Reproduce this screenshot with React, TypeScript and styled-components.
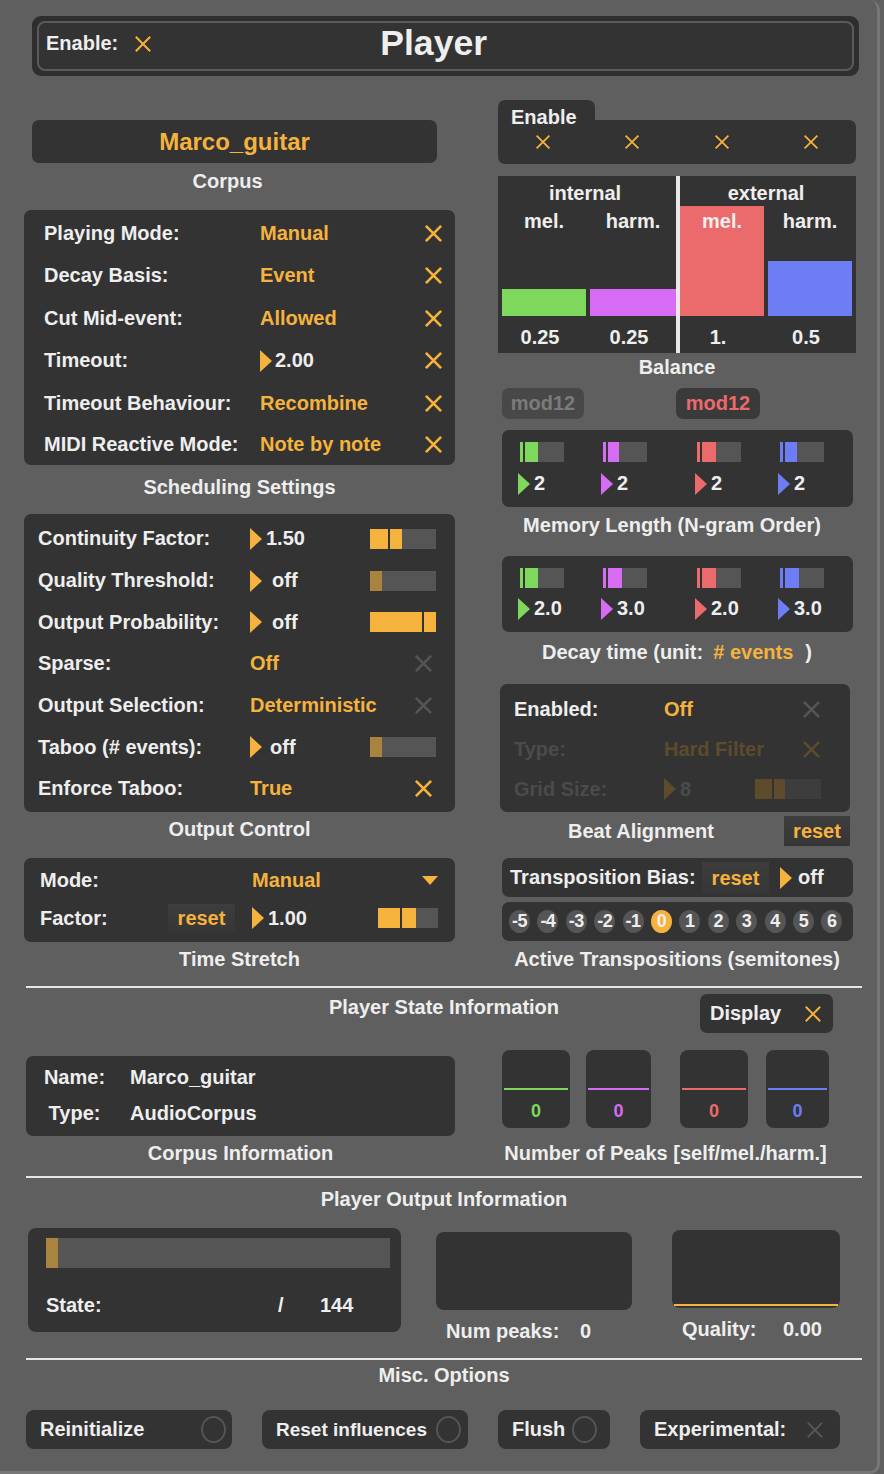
import React from "react";
import styled, { createGlobalStyle } from "styled-components";

const ORANGE = "#f5b23d";
const TEXT = "#eeeeee";
const BOX = "#333333";
const TRACK = "#555555";
const DIM = "#a8843f";
const GREEN = "#7ed85e";
const PURPLE = "#d56cf3";
const RED = "#eb6a6c";
const BLUE = "#6d7ef4";
const OFFX = "#555555";
const FADE_LABEL = "#4b4b4b";
const FADE_VAL = "#5d4b2c";

const GlobalStyle = createGlobalStyle`
  body {
    margin: 0;
    background: #5f5f5f;
    font-family: "Liberation Sans", Arial, Helvetica, sans-serif;
    font-weight: bold;
    color: ${TEXT};
  }
`;

const Panel = styled.div`
  width: 880px;
  height: 1474px;
  box-sizing: border-box;
  padding-top: 16px;
  background: #5f5f5f;
  border-right: 3px solid #777;
  border-bottom: 3px solid #777;
  border-radius: 0 10px 10px 0;
  overflow: hidden;
`;

const Header = styled.header`
  margin: 0 18px 0 32px;
  height: 60px;
  box-sizing: border-box;
  padding: 5px;
  background: #2e2e2e;
  border-radius: 9px;
`;

const HeaderInner = styled.div`
  height: 100%;
  box-sizing: border-box;
  border: 2px solid #5a5a5a;
  border-radius: 8px;
  background: ${BOX};
  display: flex;
  align-items: center;
  padding: 0 0 5px 7px;
  font-size: 20px;
`;

const Title = styled.h1`
  margin: 0 0 0 228px;
  font-size: 35.6px;
  font-weight: bold;
`;

const XSvg = styled.svg`
  display: block;
  flex: none;
`;

const XIcon = ({ size = 19, color = ORANGE, stroke = 2.8, ml = 0 }: { size?: number; color?: string; stroke?: number; ml?: number }) => (
  <XSvg width={size} height={size} viewBox="0 0 20 20" style={ml ? { marginLeft: ml } : undefined}>
    <path d="M2 2L18 18M18 2L2 18" stroke={color} strokeWidth={stroke} fill="none" />
  </XSvg>
);

const Tri = styled.span<{ $c: string }>`
  display: block;
  flex: none;
  width: 0;
  height: 0;
  border-top: 11px solid transparent;
  border-bottom: 11px solid transparent;
  border-left: 12px solid ${(p) => p.$c};
`;

const DownArrow = styled.span`
  display: block;
  justify-self: end;
  width: 0;
  height: 0;
  border-left: 8px solid transparent;
  border-right: 8px solid transparent;
  border-top: 9px solid ${ORANGE};
`;

const NumField = styled.div<{ $gap: number; $c?: string }>`
  display: flex;
  align-items: center;
  gap: ${(p) => p.$gap}px;
  color: ${(p) => p.$c ?? TEXT};
  font-size: 20px;
`;

const Track = styled.div<{ $w: number; $h: number; $bg: string }>`
  display: flex;
  flex: none;
  justify-self: end;
  width: ${(p) => p.$w}px;
  height: ${(p) => p.$h}px;
  background: ${(p) => p.$bg};
`;

const Seg = styled.div<{ $w: number; $c: string }>`
  width: ${(p) => p.$w}px;
  background: ${(p) => p.$c};
`;

const SegGap = styled.div`
  width: 2px;
  background: ${BOX};
`;

type SliderProps = { w: number; h?: number; a: number; b?: number; color: string; bg?: string };
const Slider = ({ w, h = 20, a, b = 0, color, bg = TRACK }: SliderProps) => (
  <Track $w={w} $h={h} $bg={bg}>
    <Seg $w={a} $c={color} />
    {b > 0 && (
      <>
        <SegGap />
        <Seg $w={b} $c={color} />
      </>
    )}
  </Track>
);

const Columns = styled.div`
  display: grid;
  grid-template-columns: 431px 358px;
  column-gap: 43px;
  margin-left: 24px;
  align-items: start;
`;

const Column = styled.div`
  display: flex;
  flex-direction: column;
`;

const Caption = styled.div<{ $mt: number; $shift?: number }>`
  margin-top: ${(p) => p.$mt}px;
  padding-right: ${(p) => p.$shift ?? 0}px;
  height: 22px;
  line-height: 22px;
  text-align: center;
  font-size: 20px;
  white-space: nowrap;
`;

const Accent = styled.span<{ $ml: number; $mr: number }>`
  color: ${ORANGE};
  margin: 0 ${(p) => p.$mr}px 0 ${(p) => p.$ml}px;
`;

const CorpusBox = styled.div`
  margin: 44px 18px 0 8px;
  height: 43px;
  border-radius: 7px;
  background: ${BOX};
  color: ${ORANGE};
  font-size: 24px;
  line-height: 43px;
  text-align: center;
`;

const SettingsBox = styled.div<{ $mt: number; $h: number; $pad: string }>`
  margin-top: ${(p) => p.$mt}px;
  height: ${(p) => p.$h}px;
  box-sizing: border-box;
  padding: ${(p) => p.$pad};
  border-radius: 7px;
  background: ${BOX};
`;

const Row = styled.div<{ $cols: string; $h: number }>`
  display: grid;
  grid-template-columns: ${(p) => p.$cols};
  align-items: center;
  height: ${(p) => p.$h}px;
  font-size: 20px;
  white-space: nowrap;
`;

const Label = styled.span<{ $fade?: boolean }>`
  color: ${(p) => (p.$fade ? FADE_LABEL : TEXT)};
`;

const Value = styled.span<{ $fade?: boolean }>`
  color: ${(p) => (p.$fade ? FADE_VAL : ORANGE)};
`;

const EndCell = styled.div<{ $mr?: number }>`
  justify-self: end;
  margin-right: ${(p) => p.$mr ?? 0}px;
`;

const ResetButton = styled.div<{ $w: number; $h: number }>`
  width: ${(p) => p.$w}px;
  height: ${(p) => p.$h}px;
  line-height: ${(p) => p.$h}px;
  flex: none;
  text-align: center;
  color: ${ORANGE};
  font-size: 20px;
  background: linear-gradient(#3d3d3d, #363636);
`;

/* right column */
const EnableGroup = styled.div`
  display: block;
  margin-top: 24px;
`;

const EnableTab = styled.div`
  width: 97px;
  height: 20px;
  box-sizing: border-box;
  padding-left: 13px;
  border-radius: 7px 7px 0 0;
  background: ${BOX};
  font-size: 20px;
  line-height: 34px;
  white-space: nowrap;
`;

const EnableBox = styled.div`
  height: 44px;
  border-radius: 0 7px 7px 7px;
  background: ${BOX};
  display: flex;
  align-items: center;
  justify-content: space-around;
`;

const BalanceBox = styled.div`
  margin-top: 12px;
  height: 177px;
  background: ${BOX};
  display: grid;
  grid-template-columns: 4px 84px 4px 86px 4px 84px 4px 84px 4px;
  grid-template-rows: 30px 110px 37px;
  font-size: 20px;
`;

const GroupHead = styled.div<{ $col: string; $pr?: number }>`
  grid-column: ${(p) => p.$col};
  grid-row: 1;
  padding: 6px ${(p) => p.$pr ?? 0}px 0 0;
  line-height: 22px;
  text-align: center;
`;

const Divider = styled.div`
  grid-column: 5;
  grid-row: 1 / 4;
  background: #e9e9e9;
`;

const BarCell = styled.div<{ $col: number }>`
  grid-column: ${(p) => p.$col};
  grid-row: 2;
  display: grid;
`;

const Bar = styled.div<{ $c: string }>`
  grid-area: 1 / 1;
  align-self: end;
  background: ${(p) => p.$c};
`;

const BarLabel = styled.div`
  grid-area: 1 / 1;
  align-self: start;
  margin-top: 4px;
  line-height: 22px;
  text-align: center;
`;

const BarValue = styled.div<{ $col: number }>`
  grid-column: ${(p) => p.$col};
  grid-row: 3;
  padding: 10px 8px 0 0;
  line-height: 22px;
  text-align: center;
`;

const ModRow = styled.div`
  margin: 10px 0 0 4px;
  display: flex;
  gap: 92px;
`;

const ModButton = styled.div<{ $on?: boolean }>`
  width: ${(p) => (p.$on ? 84 : 82)}px;
  height: 31px;
  border-radius: 7px;
  background: ${(p) => (p.$on ? "#3a3a3a" : "#484848")};
  color: ${(p) => (p.$on ? RED : "#7b7b7b")};
  font-size: 20px;
  line-height: 31px;
  text-align: center;
`;

const VoiceBox = styled.div<{ $mt: number; $h: number }>`
  margin: ${(p) => p.$mt}px 3px 0 4px;
  height: ${(p) => p.$h}px;
  box-sizing: border-box;
  padding: 12px 0 0 16px;
  border-radius: 7px;
  background: ${BOX};
  display: grid;
  grid-template-columns: 83px 94px 83px 1fr;
  align-items: start;
`;

const Voice = styled.div`
  display: flex;
  flex-direction: column;
  align-items: flex-start;
`;

const VoiceSlider = styled.div`
  margin-left: 2px;
`;

const VoiceNum = styled(NumField)<{ $mt: number }>`
  margin-top: ${(p) => p.$mt}px;
`;

const BeatBox = styled(SettingsBox)`
  margin-left: 2px;
  width: 350px;
`;

const BeatCaptionRow = styled.div`
  margin: 4px 6px 0 0;
  height: 30px;
  display: grid;
  grid-template-columns: 1fr 66px;
  align-items: center;
  font-size: 20px;
`;

const StripBox = styled.div<{ $mt: number }>`
  margin: ${(p) => p.$mt}px 3px 0 4px;
  height: 39px;
  border-radius: 7px;
  background: ${BOX};
  display: flex;
  align-items: center;
  font-size: 20px;
`;

const BiasLabel = styled.span`
  width: 192px;
  padding-left: 8px;
  flex: none;
  white-space: nowrap;
`;

const BiasNum = styled(NumField)`
  margin-left: 11px;
`;

const SemitoneRow = styled(StripBox)`
  padding-left: 7px;
  gap: 7.4px;
`;

const Semitone = styled.div<{ $on?: boolean }>`
  width: 21px;
  height: 23px;
  flex: none;
  border-radius: 50%;
  background: ${(p) => (p.$on ? ORANGE : TRACK)};
  color: ${TEXT};
  font-size: 18px;
  line-height: 23px;
  text-align: center;
  letter-spacing: -0.5px;
  white-space: nowrap;
`;

/* lower part */
const Rule = styled.div<{ $mt: number }>`
  margin: ${(p) => p.$mt}px 0 0 26px;
  width: 836px;
  height: 2px;
  background: #e6e6e6;
`;

const SectionHead = styled.div`
  margin: 6px 0 0 26px;
  width: 836px;
  display: grid;
  grid-template-columns: 1fr auto 1fr;
`;

const SectionTitle = styled.div<{ $mt?: number }>`
  margin: ${(p) => p.$mt ?? 0}px 0 0 26px;
  width: 836px;
  line-height: 22px;
  font-size: 20px;
  text-align: center;
`;

const HeadTitle = styled.div`
  grid-column: 2;
  line-height: 26px;
  font-size: 20px;
`;

const DisplayButton = styled.div`
  grid-column: 3;
  justify-self: end;
  margin-right: 29px;
  width: 133px;
  height: 39px;
  box-sizing: border-box;
  padding: 0 11px 0 10px;
  border-radius: 7px;
  background: ${BOX};
  display: flex;
  align-items: center;
  justify-content: space-between;
  font-size: 20px;
`;

const InfoGrid = styled.div`
  margin: 17px 0 0 26px;
  display: grid;
  grid-template-columns: 429px 327px;
  column-gap: 47px;
  row-gap: 6px;
  align-items: start;
`;

const CorpusInfo = styled.div`
  margin-top: 6px;
  height: 80px;
  box-sizing: border-box;
  padding-top: 3px;
  border-radius: 7px;
  background: ${BOX};
  display: grid;
  grid-template-columns: 97px 1fr;
  grid-auto-rows: 36px;
  column-gap: 7px;
  align-items: center;
  font-size: 20px;
`;

const InfoKey = styled.span`
  text-align: center;
`;

const PeaksRow = styled.div`
  display: flex;
  height: 78px;
`;

const PeakBox = styled.div<{ $w: number; $ml: number }>`
  width: ${(p) => p.$w}px;
  margin-left: ${(p) => p.$ml}px;
  box-sizing: border-box;
  padding: 38px 2px 0;
  border-radius: 8px;
  background: ${BOX};
`;

const PeakLine = styled.div<{ $c: string }>`
  height: 2px;
  background: ${(p) => p.$c};
`;

const PeakValue = styled.div<{ $c: string }>`
  margin-top: 11px;
  line-height: 20px;
  text-align: center;
  font-size: 18px;
  color: ${(p) => p.$c};
`;

const InfoCaption = styled.div`
  line-height: 22px;
  font-size: 20px;
  text-align: center;
  white-space: nowrap;
`;

const OutputRow = styled.div`
  margin: 18px 0 0 28px;
  display: flex;
  align-items: flex-start;
`;

const StateBox = styled.div`
  width: 373px;
  height: 104px;
  box-sizing: border-box;
  padding: 10px 11px 0 18px;
  border-radius: 8px;
  background: ${BOX};
`;

const StateLine = styled.div`
  margin-top: 26px;
  display: grid;
  grid-template-columns: 232px 42px auto;
  line-height: 22px;
  font-size: 20px;
`;

const MeterCol = styled.div<{ $ml: number; $w: number }>`
  margin-left: ${(p) => p.$ml}px;
  width: ${(p) => p.$w}px;
`;

const MeterBox = styled.div<{ $mt: number }>`
  margin-top: ${(p) => p.$mt}px;
  height: 78px;
  box-sizing: border-box;
  padding: 74px 2px 0;
  border-radius: 8px;
  background: ${BOX};
`;

const MeterTrace = styled.div<{ $c: string }>`
  height: 2px;
  background: ${(p) => p.$c};
`;

const MeterLabel = styled.div<{ $kw: number }>`
  margin-top: 10px;
  padding-left: 10px;
  display: grid;
  grid-template-columns: ${(p) => p.$kw}px auto;
  line-height: 22px;
  font-size: 20px;
`;

const MiscRow = styled.div`
  margin: 24px 0 0 26px;
  display: flex;
  gap: 30px;
`;

const MiscButton = styled.div<{ $w: number; $pr: number; $fs?: number }>`
  width: ${(p) => p.$w}px;
  height: 39px;
  box-sizing: border-box;
  padding: 0 ${(p) => p.$pr}px 0 14px;
  border-radius: 8px;
  background: ${BOX};
  display: flex;
  align-items: center;
  justify-content: space-between;
  font-size: ${(p) => p.$fs ?? 20}px;
  white-space: nowrap;
`;

const Ring = styled.span`
  width: 21px;
  height: 23px;
  flex: none;
  border: 2px solid #555;
  border-radius: 50%;
`;

const voices = [
  { c: GREEN, mem: [3, 13], decay: [3, 13], memV: "2", decayV: "2.0" },
  { c: PURPLE, mem: [3, 11], decay: [3, 14], memV: "2", decayV: "3.0" },
  { c: RED, mem: [3, 14], decay: [3, 14], memV: "2", decayV: "2.0" },
  { c: BLUE, mem: [3, 12], decay: [3, 14], memV: "2", decayV: "3.0" },
];

const balance = [
  { label: "mel.", v: 0.25, text: "0.25", c: GREEN, col: 2 },
  { label: "harm.", v: 0.25, text: "0.25", c: PURPLE, col: 4 },
  { label: "mel.", v: 1, text: "1.", c: RED, col: 6 },
  { label: "harm.", v: 0.5, text: "0.5", c: BLUE, col: 8 },
];

const peaks = [
  { c: GREEN, w: 68, ml: 0 },
  { c: PURPLE, w: 65, ml: 16 },
  { c: RED, w: 68, ml: 29 },
  { c: BLUE, w: 63, ml: 18 },
];

const semitones = [-5, -4, -3, -2, -1, 0, 1, 2, 3, 4, 5, 6];

const SCHED = "216px minmax(0, 1fr) auto";
const OUT = "212px minmax(0, 1fr) 66px";
const BEAT = "150px minmax(0, 1fr) auto";
const TIME = "128px 84px minmax(0, 1fr) 60px";

export default function App() {
  return (
    <>
      <GlobalStyle />
      <Panel>
        <Header>
          <HeaderInner>
            <span>Enable:</span>
            <XIcon size={18} stroke={2.2} ml={16} />
            <Title>Player</Title>
          </HeaderInner>
        </Header>

        <Columns>
          <Column>
            <CorpusBox>Marco_guitar</CorpusBox>
            <Caption $mt={7} $shift={24}>Corpus</Caption>

            <SettingsBox $mt={18} $h={255} $pad="2px 12px 0 20px">
              <Row $cols={SCHED} $h={42.5}>
                <Label>Playing Mode:</Label>
                <Value>Manual</Value>
                <XIcon />
              </Row>
              <Row $cols={SCHED} $h={42.5}>
                <Label>Decay Basis:</Label>
                <Value>Event</Value>
                <XIcon />
              </Row>
              <Row $cols={SCHED} $h={42.5}>
                <Label>Cut Mid-event:</Label>
                <Value>Allowed</Value>
                <XIcon />
              </Row>
              <Row $cols={SCHED} $h={42.5}>
                <Label>Timeout:</Label>
                <NumField $gap={3}>
                  <Tri $c={ORANGE} />
                  2.00
                </NumField>
                <XIcon />
              </Row>
              <Row $cols={SCHED} $h={42}>
                <Label>Timeout Behaviour:</Label>
                <Value>Recombine</Value>
                <XIcon />
              </Row>
              <Row $cols={SCHED} $h={40}>
                <Label>MIDI Reactive Mode:</Label>
                <Value>Note by note</Value>
                <XIcon />
              </Row>
            </SettingsBox>
            <Caption $mt={11}>Scheduling Settings</Caption>

            <SettingsBox $mt={16} $h={298} $pad="4px 19px 0 14px">
              <Row $cols={OUT} $h={41.7}>
                <Label>Continuity Factor:</Label>
                <NumField $gap={4}>
                  <Tri $c={ORANGE} />
                  1.50
                </NumField>
                <Slider w={66} a={18} b={12} color={ORANGE} />
              </Row>
              <Row $cols={OUT} $h={41.7}>
                <Label>Quality Threshold:</Label>
                <NumField $gap={10}>
                  <Tri $c={ORANGE} />
                  off
                </NumField>
                <Slider w={66} a={12} color={DIM} />
              </Row>
              <Row $cols={OUT} $h={41.7}>
                <Label>Output Probability:</Label>
                <NumField $gap={10}>
                  <Tri $c={ORANGE} />
                  off
                </NumField>
                <Slider w={66} a={52} b={12} color={ORANGE} />
              </Row>
              <Row $cols={OUT} $h={41.7}>
                <Label>Sparse:</Label>
                <Value>Off</Value>
                <EndCell $mr={3}>
                  <XIcon color={OFFX} />
                </EndCell>
              </Row>
              <Row $cols={OUT} $h={41.7}>
                <Label>Output Selection:</Label>
                <Value>Deterministic</Value>
                <EndCell $mr={3}>
                  <XIcon color={OFFX} />
                </EndCell>
              </Row>
              <Row $cols={OUT} $h={41.7}>
                <Label>Taboo (# events):</Label>
                <NumField $gap={8}>
                  <Tri $c={ORANGE} />
                  off
                </NumField>
                <Slider w={66} a={12} color={DIM} />
              </Row>
              <Row $cols={OUT} $h={41.7}>
                <Label>Enforce Taboo:</Label>
                <Value>True</Value>
                <EndCell $mr={3}>
                  <XIcon />
                </EndCell>
              </Row>
            </SettingsBox>
            <Caption $mt={6}>Output Control</Caption>

            <SettingsBox $mt={18} $h={84} $pad="3px 17px 0 16px">
              <Row $cols={TIME} $h={38}>
                <Label>Mode:</Label>
                <span />
                <Value>Manual</Value>
                <DownArrow />
              </Row>
              <Row $cols={TIME} $h={38}>
                <Label>Factor:</Label>
                <ResetButton $w={67} $h={28}>reset</ResetButton>
                <NumField $gap={4}>
                  <Tri $c={ORANGE} />
                  1.00
                </NumField>
                <Slider w={60} a={22} b={14} color={ORANGE} />
              </Row>
            </SettingsBox>
            <Caption $mt={6}>Time Stretch</Caption>
          </Column>

          <Column>
            <EnableGroup>
              <EnableTab>Enable</EnableTab>
              <EnableBox>
                {voices.map((v) => (
                  <XIcon key={v.c} size={16} stroke={2.2} />
                ))}
              </EnableBox>
            </EnableGroup>

            <BalanceBox>
              <GroupHead $col="2 / 5" $pr={8}>internal</GroupHead>
              <GroupHead $col="6 / 9">external</GroupHead>
              <Divider />
              {balance.map((b) => (
                <BarCell key={b.col} $col={b.col}>
                  <Bar $c={b.c} style={{ height: b.v * 110 }} />
                  <BarLabel>{b.label}</BarLabel>
                </BarCell>
              ))}
              {balance.map((b) => (
                <BarValue key={b.col} $col={b.col}>
                  {b.text}
                </BarValue>
              ))}
            </BalanceBox>
            <Caption $mt={3}>Balance</Caption>

            <ModRow>
              <ModButton>mod12</ModButton>
              <ModButton $on>mod12</ModButton>
            </ModRow>

            <VoiceBox $mt={11} $h={77}>
              {voices.map((v) => (
                <Voice key={v.c}>
                  <VoiceSlider>
                    <Slider w={44} a={v.mem[0]} b={v.mem[1]} color={v.c} />
                  </VoiceSlider>
                  <VoiceNum $gap={4} $mt={10}>
                    <Tri $c={v.c} />
                    {v.memV}
                  </VoiceNum>
                </Voice>
              ))}
            </VoiceBox>
            <Caption $mt={7} $shift={10}>Memory Length (N-gram Order)</Caption>

            <VoiceBox $mt={20} $h={76}>
              {voices.map((v) => (
                <Voice key={v.c}>
                  <VoiceSlider>
                    <Slider w={44} a={v.decay[0]} b={v.decay[1]} color={v.c} />
                  </VoiceSlider>
                  <VoiceNum $gap={4} $mt={9}>
                    <Tri $c={v.c} />
                    {v.decayV}
                  </VoiceNum>
                </Voice>
              ))}
            </VoiceBox>
            <Caption $mt={9}>
              Decay time (unit:
              <Accent $ml={10} $mr={12}># events</Accent>)
            </Caption>

            <BeatBox $mt={21} $h={128} $pad="5px 29px 0 14px">
              <Row $cols={BEAT} $h={40}>
                <Label>Enabled:</Label>
                <Value>Off</Value>
                <XIcon color={OFFX} />
              </Row>
              <Row $cols={BEAT} $h={40}>
                <Label $fade>Type:</Label>
                <Value $fade>Hard Filter</Value>
                <XIcon color={FADE_VAL} />
              </Row>
              <Row $cols={BEAT} $h={40}>
                <Label $fade>Grid Size:</Label>
                <NumField $gap={4} $c={FADE_LABEL}>
                  <Tri $c={FADE_VAL} />8
                </NumField>
                <Slider w={66} a={17} b={11} color={FADE_VAL} bg="#3d3d3d" />
              </Row>
            </BeatBox>
            <BeatCaptionRow>
              <InfoCaption>Beat Alignment</InfoCaption>
              <ResetButton $w={66} $h={30}>reset</ResetButton>
            </BeatCaptionRow>

            <StripBox $mt={12}>
              <BiasLabel>Transposition Bias:</BiasLabel>
              <ResetButton $w={67} $h={32}>reset</ResetButton>
              <BiasNum $gap={6}>
                <Tri $c={ORANGE} />
                off
              </BiasNum>
            </StripBox>
            <SemitoneRow $mt={5}>
              {semitones.map((s) => (
                <Semitone key={s} $on={s === 0}>
                  {s}
                </Semitone>
              ))}
            </SemitoneRow>
            <Caption $mt={7}>Active Transpositions (semitones)</Caption>
          </Column>
        </Columns>

        <Rule $mt={16} />
        <SectionHead>
          <HeadTitle>Player State Information</HeadTitle>
          <DisplayButton>
            Display
            <XIcon size={18} stroke={2.2} />
          </DisplayButton>
        </SectionHead>

        <InfoGrid>
          <CorpusInfo>
            <InfoKey>Name:</InfoKey>
            <span>Marco_guitar</span>
            <InfoKey>Type:</InfoKey>
            <span>AudioCorpus</span>
          </CorpusInfo>
          <PeaksRow>
            {peaks.map((p) => (
              <PeakBox key={p.c} $w={p.w} $ml={p.ml}>
                <PeakLine $c={p.c} />
                <PeakValue $c={p.c}>0</PeakValue>
              </PeakBox>
            ))}
          </PeaksRow>
          <InfoCaption>Corpus Information</InfoCaption>
          <InfoCaption>Number of Peaks [self/mel./harm.]</InfoCaption>
        </InfoGrid>

        <Rule $mt={12} />
        <SectionTitle $mt={10}>Player Output Information</SectionTitle>

        <OutputRow>
          <StateBox>
            <Slider w={344} h={30} a={12} color={DIM} />
            <StateLine>
              <span>State:</span>
              <span>/</span>
              <span>144</span>
            </StateLine>
          </StateBox>
          <MeterCol $ml={35} $w={196}>
            <MeterBox $mt={4} />
            <MeterLabel $kw={134}>
              <span>Num peaks:</span>
              <span>0</span>
            </MeterLabel>
          </MeterCol>
          <MeterCol $ml={40} $w={168}>
            <MeterBox $mt={2}>
              <MeterTrace $c={ORANGE} />
            </MeterBox>
            <MeterLabel $kw={101}>
              <span>Quality:</span>
              <span>0.00</span>
            </MeterLabel>
          </MeterCol>
        </OutputRow>

        <Rule $mt={16} />
        <SectionTitle $mt={4}>Misc. Options</SectionTitle>

        <MiscRow>
          <MiscButton $w={206} $pr={6}>
            Reinitialize
            <Ring />
          </MiscButton>
          <MiscButton $w={206} $pr={7} $fs={19}>
            Reset influences
            <Ring />
          </MiscButton>
          <MiscButton $w={112} $pr={13}>
            Flush
            <Ring />
          </MiscButton>
          <MiscButton $w={200} $pr={16}>
            Experimental:
            <XIcon size={18} stroke={2.2} color={OFFX} />
          </MiscButton>
        </MiscRow>
      </Panel>
    </>
  );
}
